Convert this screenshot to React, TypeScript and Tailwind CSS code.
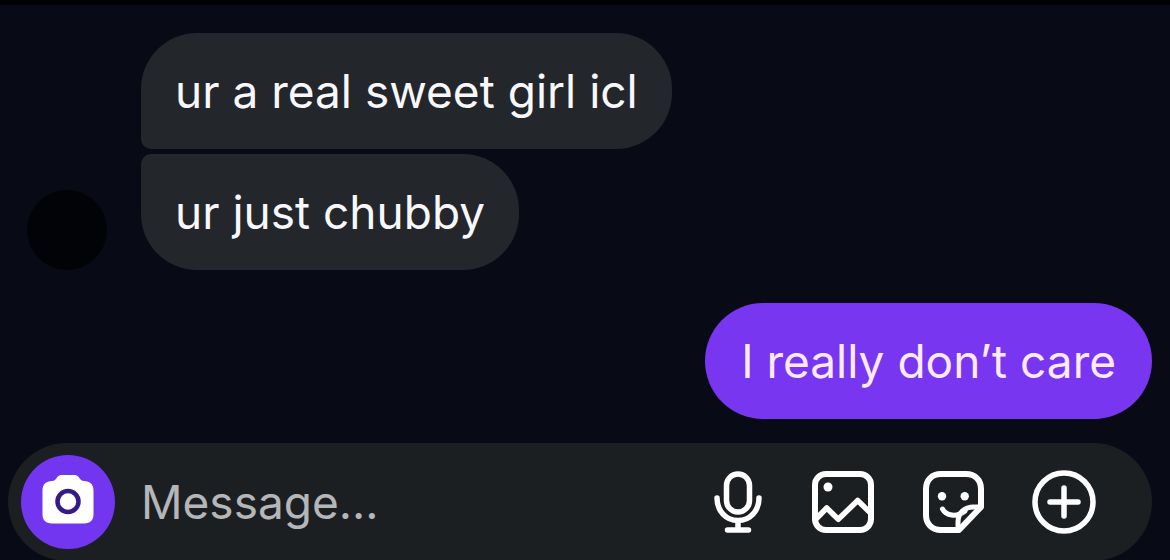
import React, { useState } from 'react';

interface Message {
    id: number;
    text: string;
}

const received: Message[] = [
    { id: 1, text: 'ur a real sweet girl icl' },
    { id: 2, text: 'ur just chubby' },
];

const sent: Message[] = [{ id: 3, text: 'I really don’t care' }];

// --- ICONS ---
const CameraIcon = () => (
    <svg viewBox="0 0 94 94" className="w-full" aria-hidden="true">
        <path
            d="M31 26C33.500 26 34.500 24.500 36 22.500C37.500 20.500 39 20 41.500 20H52.500C55 20 56.500 20.500 58 22.500C59.500 24.500 60.500 26 63 26C69 26 72.500 29.500 72.500 35.500V59C72.500 65 69.500 68.500 63 68.500H31C24.500 68.500 21.500 65 21.500 59V35.500C21.500 29.500 25 26 31 26Z"
            fill="#fff"
        />
        <circle cx="47" cy="46.500" r="10.500" fill="none" stroke="#351a88" strokeWidth="4.500" />
    </svg>
);

const MicIcon = () => (
    <svg viewBox="2 0 52 64" className="w-full" fill="none" stroke="currentColor" strokeWidth="5.500" strokeLinecap="round" aria-hidden="true">
        <rect x="14.500" y="4" width="23" height="38" rx="11.500" />
        <path d="M5 28C5 41 14 50.500 26 50.500S47 41 47 28" />
        <path d="M26 51V59M15.500 60H36.500" />
    </svg>
);

const PhotoIcon = () => (
    <svg viewBox="1 0 64 64" className="w-full" fill="none" stroke="currentColor" strokeWidth="6" strokeLinejoin="round" aria-hidden="true">
        <rect x="4" y="4" width="56" height="56" rx="11" />
        <path d="M4 50L15.700 38L27.300 49.300L46.700 30.500L60 43.500" strokeWidth="5.500" />
        <circle cx="17" cy="17" r="4.500" fill="currentColor" stroke="none" />
    </svg>
);

const StickerIcon = () => (
    <svg viewBox="0 0 64 64" className="w-full" fill="none" stroke="currentColor" strokeWidth="6" strokeLinecap="round" strokeLinejoin="round" aria-hidden="true">
        <path d="M37 60H19C10 60 4 54 4 45V19C4 10 10 4 19 4H44C53 4 59 10 59 19V37Z" />
        <path d="M59 37H52C42 37 36 43 36 52V60" strokeWidth="5" />
        <path d="M20.500 39C24 45.500 34 48 43 41" strokeWidth="5" />
        <circle cx="20" cy="26.300" r="4.200" fill="currentColor" stroke="none" />
        <circle cx="42.700" cy="26.300" r="4.200" fill="currentColor" stroke="none" />
    </svg>
);

const PlusIcon = () => (
    <svg viewBox="0 0 64 64" className="w-full" fill="none" stroke="currentColor" strokeWidth="5.500" strokeLinecap="round" aria-hidden="true">
        <circle cx="32" cy="32" r="29" />
        <path d="M32 18V46M18 32H46" />
    </svg>
);

const App: React.FC = () => {
    const [draft, setDraft] = useState('');

    return (
        <div className="min-h-screen flex flex-col border-t-[5px] border-black bg-[#080b16] font-[Inter,'Liberation_Sans',sans-serif] text-[46px] leading-[60px] text-[#f8f8fc]">
            <main className="flex-1 flex flex-col pt-7 pb-6 pr-[18px]">
                {/* RECEIVED */}
                <div className="flex items-end gap-[34px] pl-[27px]">
                    <div className="w-20 h-20 shrink-0 rounded-full bg-[#020306]" />
                    <div className="flex flex-col items-start gap-[5px]">
                        {received.map((m, i) => (
                            <p
                                key={m.id}
                                className={`bg-[#23262b] px-[34px] py-7 rounded-[56px] ${i === 0 ? 'rounded-bl-[10px]' : 'rounded-tl-[10px]'}`}
                            >
                                {m.text}
                            </p>
                        ))}
                    </div>
                </div>

                {/* SENT */}
                <div className="flex flex-col items-end mt-[33px]">
                    {sent.map(m => (
                        <p key={m.id} className="bg-[#7836f0] text-[#fbeaff] px-[36px] py-7 rounded-[58px]">
                            {m.text}
                        </p>
                    ))}
                </div>
            </main>

            {/* COMPOSER */}
            <form
                onSubmit={e => e.preventDefault()}
                className="flex items-center h-[118px] ml-2 mr-[18px] pl-[13px] pr-14 rounded-full bg-[#1c1f21]"
            >
                <button type="button" aria-label="Camera" className="w-[94px] h-[94px] shrink-0 rounded-full bg-[#7336f0]">
                    <CameraIcon />
                </button>
                <input
                    aria-label="Message"
                    value={draft}
                    onChange={e => setDraft(e.target.value)}
                    placeholder="Message..."
                    className="flex-1 min-w-0 ml-[26px] bg-transparent outline-none placeholder:text-[#b4b6b8]"
                />
                <div className="flex items-center gap-[46px] shrink-0 text-white">
                    <button type="button" aria-label="Voice message" className="w-[52px]"><MicIcon /></button>
                    <button type="button" aria-label="Photo" className="w-16"><PhotoIcon /></button>
                    <button type="button" aria-label="Sticker" className="w-16"><StickerIcon /></button>
                    <button type="button" aria-label="More" className="w-16"><PlusIcon /></button>
                </div>
            </form>
        </div>
    );
};

export default App;
